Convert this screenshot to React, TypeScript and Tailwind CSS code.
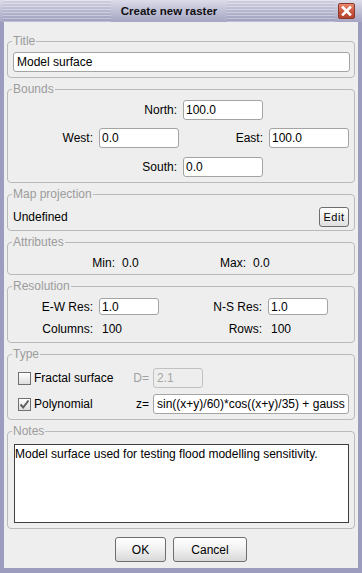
import React from "react";

const stripes =
  "[background:repeating-linear-gradient(to_bottom,rgba(255,255,255,0.28)_0px,rgba(255,255,255,0.28)_1px,rgba(60,60,110,0.07)_1px,rgba(60,60,110,0.07)_3px)]";

function Field({
  children,
  className = "",
}: {
  children?: React.ReactNode;
  className?: string;
}) {
  return (
    <div
      className={
        "h-[20px] bg-white border border-[#a4a4a4] rounded-[3px] pl-[2px] flex items-center overflow-hidden whitespace-nowrap shrink-0 " +
        className
      }
    >
      {children}
    </div>
  );
}

function Group({
  label,
  children,
  className = "",
}: {
  label: string;
  children?: React.ReactNode;
  className?: string;
}) {
  return (
    <fieldset
      className={
        "border border-[#bababa] rounded-[4px] pl-[5px] pr-[4px] min-w-0 " +
        className
      }
    >
      <legend className="ml-[-1px] px-[1px] text-[#9c9c9c] leading-[14px]">
        {label}
      </legend>
      {children}
    </fieldset>
  );
}

function Checkbox({ checked }: { checked?: boolean }) {
  return (
    <div className="w-[13px] h-[13px] border border-[#707070] bg-[linear-gradient(to_bottom,#ffffff,#dedede)] flex items-center justify-center shrink-0">
      {checked && (
        <svg width="11" height="11" viewBox="0 0 11 11">
          <path
            d="M1.5 5.5 L4.2 8.5 L9.5 1.5"
            fill="none"
            stroke="#5e5e5e"
            strokeWidth="2"
          />
        </svg>
      )}
    </div>
  );
}

export default function App() {
  return (
    <div className="w-[362px] h-[573px] flex flex-col bg-[#9c9cbe] font-['Liberation_Sans',Arial,sans-serif] text-[12px] leading-[14px] text-black overflow-hidden">
      {/* title bar */}
      <div className="h-[22px] shrink-0 flex items-stretch bg-[linear-gradient(to_bottom,#dcdcea,#c2c2d8_45%,#a6a6c4)]">
        <div className={"ml-[3px] flex-1 " + stripes} />
        <div className="px-[10px] flex items-center font-bold text-[11.5px] text-[#111]">
          Create new raster
        </div>
        <div className={"flex-1 " + stripes} />
        <div className="ml-[3px] mr-[7px] flex items-center">
          <div className="w-[17px] h-[16px] rounded-[2px] border border-[#8c3828] bg-[linear-gradient(to_bottom,#e88a72,#c85640_55%,#b3422f)] flex items-center justify-center">
            <svg width="11" height="10" viewBox="0 0 11 10">
              <path
                d="M2 1.5 L9 8.5 M9 1.5 L2 8.5"
                stroke="#ffffff"
                strokeWidth="2.6"
                strokeLinecap="square"
              />
            </svg>
          </div>
        </div>
      </div>

      {/* body */}
      <div className="flex-1 mx-[4px] mb-[5px] bg-[#eeeeee] px-[3px] pt-[12px] flex flex-col">
        <div className="flex flex-col gap-[4px]">
          <Group label="Title" className="pt-[4px] pb-[5px]">
            <Field className="pl-[3px]">Model surface</Field>
          </Group>

          <Group label="Bounds" className="pt-[4px] pb-[5px]">
            <div className="flex items-center h-[20px]">
              <span className="w-[164px] text-right">North:</span>
              <Field className="ml-[6px] w-[80px]">100.0</Field>
            </div>
            <div className="mt-[8px] flex items-center h-[20px]">
              <span className="w-[80px] text-right">West:</span>
              <Field className="ml-[6px] w-[80px]">0.0</Field>
              <span className="w-[84px] text-right">East:</span>
              <Field className="ml-[6px] w-[80px]">100.0</Field>
            </div>
            <div className="mt-[9px] flex items-center h-[20px]">
              <span className="w-[164px] text-right">South:</span>
              <Field className="ml-[6px] w-[80px]">0.0</Field>
            </div>
          </Group>

          <Group label="Map projection" className="pt-[6px] pb-[3px]">
            <div className="flex items-center justify-between h-[20px]">
              <span>Undefined</span>
              <div className="mr-[1px] w-[30px] h-[20px] border border-[#6e6e6e] rounded-[3px] bg-[linear-gradient(to_bottom,#ffffff,#e0e0e0)] flex items-center justify-center text-[11px] tracking-[0.5px]">
                Edit
              </div>
            </div>
          </Group>

          <Group label="Attributes" className="pt-[4px] pb-[1px]">
            <div className="flex items-center h-[20px]">
              <span className="w-[102px] text-right">Min:</span>
              <span className="ml-[7px] w-[70px]">0.0</span>
              <span className="w-[54px] text-right">Max:</span>
              <span className="ml-[7px]">0.0</span>
            </div>
          </Group>

          <Group label="Resolution" className="pt-[5px] pb-[5px]">
            <div className="flex items-center h-[17px]">
              <span className="w-[80px] text-right">E-W Res:</span>
              <Field className="ml-[6px] w-[60px] !h-[17px]">1.0</Field>
              <span className="w-[103px] text-right">N-S Res:</span>
              <Field className="ml-[6px] w-[60px] !h-[17px]">1.0</Field>
            </div>
            <div className="mt-[6px] flex items-center h-[16px]">
              <span className="w-[80px] text-right">Columns:</span>
              <span className="ml-[6px] w-[60px] pl-[3px]">100</span>
              <span className="w-[103px] text-right">Rows:</span>
              <span className="ml-[6px] pl-[3px]">100</span>
            </div>
          </Group>

          <Group label="Type" className="pt-[7px] pb-[5px]">
            <div className="flex items-center h-[20px]">
              <div className="w-[116px] flex items-center">
                <div className="ml-[5px]">
                  <Checkbox />
                </div>
                <span className="ml-[3px]">Fractal surface</span>
              </div>
              <span className="w-[20px] text-right text-[#a0a0a0]">D=</span>
              <Field className="ml-[4px] w-[50px] !bg-[#eeeeee] !border-[#c2c2c2] text-[#a6a6a6] pl-[3px]">
                2.1
              </Field>
            </div>
            <div className="mt-[6px] flex items-center h-[20px]">
              <div className="w-[116px] flex items-center">
                <div className="ml-[5px]">
                  <Checkbox checked />
                </div>
                <span className="ml-[3px]">Polynomial</span>
              </div>
              <span className="w-[20px] text-right">z=</span>
              <Field className="ml-[4px] flex-1 mr-[1px] pl-[3px] !shrink">
                sin((x+y)/60)*cos((x+y)/35) + gauss
              </Field>
            </div>
          </Group>

          <Group label="Notes" className="pt-[6px] pb-[5px]">
            <div className="h-[79px] mx-[1px] bg-white border border-[#3f3f3f] pt-[2px] whitespace-nowrap overflow-hidden">
              Model surface used for testing flood modelling sensitivity.
            </div>
          </Group>
        </div>

        <div className="mt-[8px] flex justify-center gap-[7px]">
          <div className="w-[51px] h-[25px] border border-[#6e6e6e] rounded-[3px] bg-[linear-gradient(to_bottom,#ffffff,#f4f4f4_40%,#d8d8d8)] flex items-center justify-center">
            OK
          </div>
          <div className="w-[74px] h-[25px] border border-[#6e6e6e] rounded-[3px] bg-[linear-gradient(to_bottom,#ffffff,#f4f4f4_40%,#d8d8d8)] flex items-center justify-center">
            Cancel
          </div>
        </div>
      </div>
    </div>
  );
}
